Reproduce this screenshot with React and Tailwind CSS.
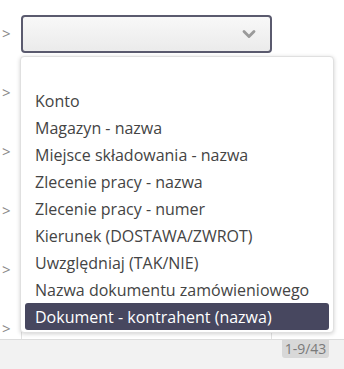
import { ChevronDown } from 'lucide-react';

const options = [
  '',
  'Konto',
  'Magazyn - nazwa',
  'Miejsce składowania - nazwa',
  'Zlecenie pracy - nazwa',
  'Zlecenie pracy - numer',
  'Kierunek (DOSTAWA/ZWROT)',
  'Uwzględniaj (TAK/NIE)',
  'Nazwa dokumentu zamówieniowego',
  'Dokument - kontrahent (nazwa)',
];

const App = () => {
  return (
    <div className="w-[344px] h-[369px] bg-[#f2f2f2] overflow-hidden relative" style={{ fontFamily: '"Open Sans", sans-serif' }}>
      {/* table rows */}
      <div className="h-[340px] bg-white border-b border-[#dcdcdc] overflow-hidden pt-[4px]">
        {[0, 1, 2, 3, 4, 5].map((i) => (
          <div key={i} className="h-[59px] flex items-center">
            <span className="w-[21px] pl-[2px] text-[15px] text-[#888] leading-none">&gt;</span>
            <div className={`w-[251px] h-full flex items-center ${i === 5 ? 'border-x border-[#e2e2e2]' : ''}`}>
              {i === 0 && (
                <div className="w-full h-[38px] rounded-[4px] border-2 border-[#5a5a6e] bg-gradient-to-b from-[#f8f8f8] to-[#ebebeb] flex items-center justify-end pr-[11px]">
                  <ChevronDown size={20} strokeWidth={3.4} className="text-[#9a9a9a]" />
                </div>
              )}
            </div>
          </div>
        ))}
      </div>

      {/* footer */}
      <div className="flex justify-end pr-[15px]">
        <div className="w-[47px] h-[18px] bg-[#d8d8d8] rounded-b-[3px] text-[14px] text-[#7a7a7a] flex items-center justify-center leading-none">
          1-9/43
        </div>
      </div>

      {/* dropdown */}
      <div className="absolute left-[20px] top-[56px] w-[314px] bg-white border border-[#e0e0e0] rounded-[4px] shadow-[0_1px_4px_rgba(0,0,0,0.18)] pt-[3px] pb-[2px] px-[4px]">
        {options.map((o, i) => (
          <div
            key={i}
            className={`h-[27px] pl-[10px] flex items-center text-[16px] rounded-[3px] ${i === options.length - 1 ? 'bg-[#47475f] text-white' : 'text-[#444]'}`}
          >
            {o}
          </div>
        ))}
      </div>
    </div>
  );
};

export default App;
